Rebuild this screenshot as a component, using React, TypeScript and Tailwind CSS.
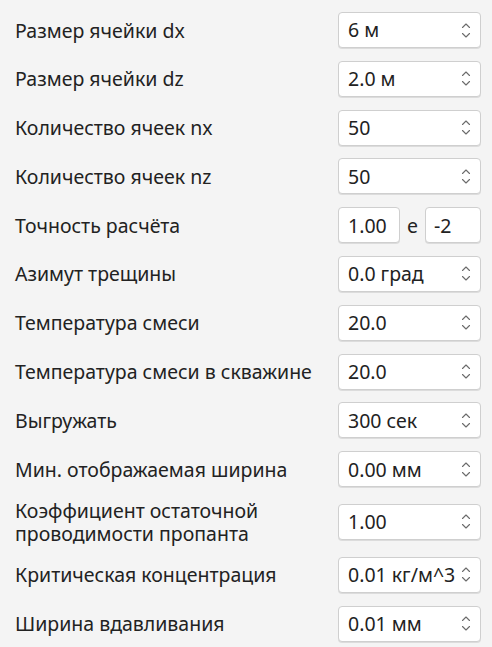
import React from "react";

const Spin = () => (
  <svg width="10" height="17" viewBox="0 0 10 17" className="shrink-0" fill="none" stroke="#6b6b6b" strokeWidth="1.1" strokeLinecap="round" strokeLinejoin="round">
    <path d="M1.5 5.5 L5 2 L8.5 5.5" />
    <path d="M1.5 11.5 L5 15 L8.5 11.5" />
  </svg>
);

const Box = ({ value }: { value: string }) => (
  <div className="flex h-[36px] w-[143px] items-center rounded-[4px] border border-[#cfcfcf] bg-white pl-[9px] pr-[9px] shadow-[0_1px_0_#dcdcdc]">
    <span className="flex-1 overflow-hidden whitespace-nowrap text-[19.5px] text-[#222222]">{value}</span>
    <Spin />
  </div>
);

const Row = ({ label, children, tall }: { label: React.ReactNode; children: React.ReactNode; tall?: boolean }) => (
  <div className={`flex items-center justify-between ${tall ? "my-[-1px] h-[46px]" : "h-[36px]"}`}>
    <div className="whitespace-nowrap text-[19.5px] leading-[23px] text-[#222222]">{label}</div>
    {children}
  </div>
);

export default function App() {
  const rows: [string, string][] = [
    ["Размер ячейки dx", "6 м"],
    ["Размер ячейки dz", "2.0 м"],
    ["Количество ячеек nx", "50"],
    ["Количество ячеек nz", "50"],
  ];
  const rows2: [string, string][] = [
    ["Азимут трещины", "0.0 град"],
    ["Температура смеси", "20.0"],
    ["Температура смеси в скважине", "20.0"],
    ["Выгружать", "300 сек"],
    ["Мин. отображаемая ширина", "0.00 мм"],
  ];
  return (
    <div className="min-h-[647px] w-[492px] bg-[#f4f4f4] pl-[15px] pr-[11px] pt-[12px] font-['Noto_Sans',sans-serif]">
      <div className="flex flex-col gap-[12.8px]">
        {rows.map(([l, v]) => (
          <Row key={l} label={l}>
            <Box value={v} />
          </Row>
        ))}
        <Row label="Точность расчёта">
          <div className="flex w-[143px] items-center">
            <div className="flex h-[36px] w-[62px] items-center rounded-[4px] border border-[#cfcfcf] bg-white pl-[9px] text-[19.5px] text-[#222222] shadow-[0_1px_0_#dcdcdc]">1.00</div>
            <span className="flex-1 text-center text-[19.5px] text-[#222222]">e</span>
            <div className="flex h-[36px] w-[56px] items-center rounded-[4px] border border-[#cfcfcf] bg-white pl-[8px] text-[19.5px] text-[#222222] shadow-[0_1px_0_#dcdcdc]">-2</div>
          </div>
        </Row>
        {rows2.map(([l, v]) => (
          <Row key={l} label={l}>
            <Box value={v} />
          </Row>
        ))}
        <Row tall label={<>Коэффициент остаточной<br />проводимости пропанта</>}>
          <Box value="1.00" />
        </Row>
        <Row label="Критическая концентрация">
          <Box value="0.01 кг/м^3" />
        </Row>
        <Row label="Ширина вдавливания">
          <Box value="0.01 мм" />
        </Row>
      </div>
    </div>
  );
}
